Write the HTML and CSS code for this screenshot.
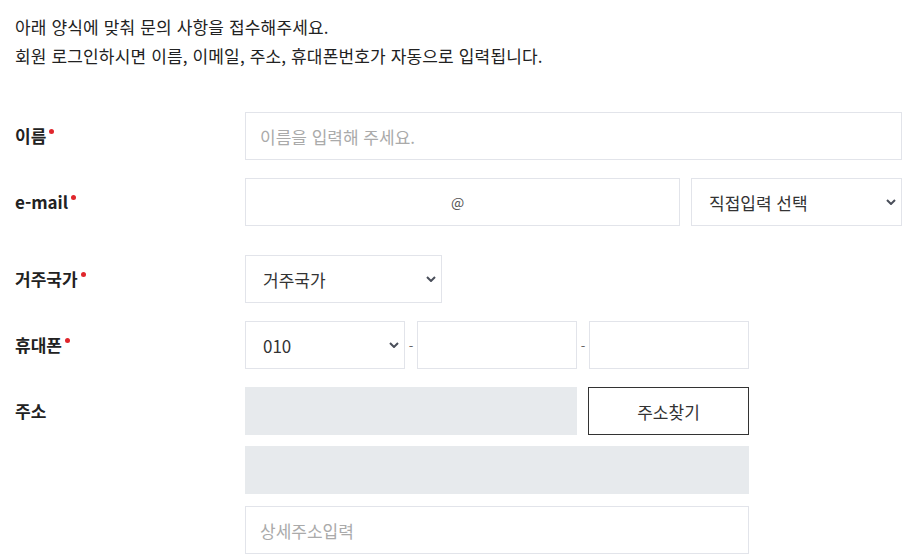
FILE: index.html
```html
<!DOCTYPE html>
<html lang="ko">
<head>
    <meta charset="UTF-8">
    <meta name="viewport" content="width=device-width, initial-scale=1.0">
    <title>문의하기</title>
    <link rel="stylesheet" href="styles.css">
</head>
<body>
    <div class="page">
        <p class="intro">아래 양식에 맞춰 문의 사항을 접수해주세요.<br>회원 로그인하시면 이름, 이메일, 주소, 휴대폰번호가 자동으로 입력됩니다.</p>

        <div class="form">
            <!-- 이름 -->
            <div class="row">
                <label class="label req">이름</label>
                <div class="field">
                    <input type="text" class="input w-full" placeholder="이름을 입력해 주세요.">
                </div>
            </div>

            <!-- 이메일 -->
            <div class="row row-wide">
                <label class="label req">e-mail</label>
                <div class="field inline">
                    <div class="email-box">
                        <input type="text" class="bare">
                        <span class="at">@</span>
                        <input type="text" class="bare">
                    </div>
                    <div class="select-wrap w-domain">
                        <select class="select">
                            <option>직접입력 선택</option>
                        </select>
                        <svg class="chev" width="10" height="6" viewBox="0 0 10 6"><path d="M1 1l4 4 4-4" fill="none" stroke="#4a4f5a" stroke-width="2"/></svg>
                    </div>
                </div>
            </div>

            <!-- 거주국가 -->
            <div class="row">
                <label class="label req">거주국가</label>
                <div class="field">
                    <div class="select-wrap w-country">
                        <select class="select">
                            <option>거주국가</option>
                        </select>
                        <svg class="chev" width="10" height="6" viewBox="0 0 10 6"><path d="M1 1l4 4 4-4" fill="none" stroke="#4a4f5a" stroke-width="2"/></svg>
                    </div>
                </div>
            </div>

            <!-- 휴대폰 -->
            <div class="row">
                <label class="label req">휴대폰</label>
                <div class="field inline">
                    <div class="select-wrap w-third">
                        <select class="select">
                            <option>010</option>
                        </select>
                        <svg class="chev" width="10" height="6" viewBox="0 0 10 6"><path d="M1 1l4 4 4-4" fill="none" stroke="#4a4f5a" stroke-width="2"/></svg>
                    </div>
                    <span class="dash">-</span>
                    <input type="text" class="input w-third">
                    <span class="dash">-</span>
                    <input type="text" class="input w-third">
                </div>
            </div>

            <!-- 주소 -->
            <div class="row">
                <label class="label">주소</label>
                <div class="field">
                    <div class="inline gap">
                        <input type="text" class="input readonly w-zip" readonly>
                        <button class="btn-find">주소찾기</button>
                    </div>
                    <input type="text" class="input readonly w-addr line2" readonly>
                    <input type="text" class="input w-addr line3" placeholder="상세주소입력">
                </div>
            </div>
        </div>
    </div>
</body>
</html>
```

FILE: styles.css
```css
body {
    margin: 0;
    font-family: "Noto Sans CJK KR", "Noto Sans", sans-serif;
    color: #222;
    background: #fff;
}
.page {
    padding: 12px 15px 0;
}
.intro {
    margin: 0;
    font-size: 17px;
    line-height: 29px;
    letter-spacing: 0.15px;
}
.form {
    margin-top: 42px;
}
.row {
    display: grid;
    grid-template-columns: 230px 1fr;
    margin-bottom: 18px;
}
.row-wide {
    margin-bottom: 29px;
}
.label {
    font-size: 17px;
    font-weight: bold;
    line-height: 48px;
    color: #222;
}
.req::after {
    content: "";
    display: inline-block;
    width: 5px;
    height: 5px;
    margin-left: 3px;
    border-radius: 50%;
    background: #e0262c;
    vertical-align: top;
    margin-top: 17px;
}
.inline {
    display: flex;
    align-items: center;
}
.gap {
    gap: 11px;
}
.input {
    box-sizing: border-box;
    height: 48px;
    padding: 0 14px;
    border: 1px solid #e2e4ea;
    border-radius: 0;
    font-family: inherit;
    font-size: 17px;
    color: #222;
    outline: none;
    display: block;
}
.input::placeholder {
    color: #aaa;
}
.readonly {
    background: #e7eaed;
    border-color: #e7eaed;
}
.w-full { width: 657px; }
.w-third { width: 160px; }
.w-zip { width: 332px; }
.w-addr { width: 504px; }
.w-country { width: 197px; }
.w-domain { width: 211px; margin-left: 11px; }
.line2 { margin-top: 11px; }
.line3 { margin-top: 12px; }

.email-box {
    box-sizing: border-box;
    width: 435px;
    height: 48px;
    border: 1px solid #e2e4ea;
    display: flex;
    align-items: center;
}
.bare {
    flex: 1;
    min-width: 0;
    height: 100%;
    border: none;
    outline: none;
    padding: 0 10px;
    font-family: inherit;
    font-size: 17px;
    background: transparent;
}
.at {
    font-size: 14px;
    color: #555;
    padding: 0 1px;
    margin-left: -10px;
}

.select-wrap {
    position: relative;
    height: 48px;
}
.select {
    box-sizing: border-box;
    width: 100%;
    height: 48px;
    padding: 0 24px 0 17px;
    border: 1px solid #e2e4ea;
    border-radius: 0;
    background: #fff;
    font-family: inherit;
    font-size: 17px;
    color: #333;
    appearance: none;
    -webkit-appearance: none;
    outline: none;
}
.chev {
    position: absolute;
    right: 6px;
    top: 21px;
    pointer-events: none;
}
.dash {
    width: 12px;
    text-align: center;
    font-size: 13px;
    color: #666;
}
.btn-find {
    box-sizing: border-box;
    width: 161px;
    height: 48px;
    border: 1px solid #333;
    border-radius: 0;
    background: #fff;
    font-family: inherit;
    font-size: 17px;
    color: #333;
    cursor: pointer;
}
```
